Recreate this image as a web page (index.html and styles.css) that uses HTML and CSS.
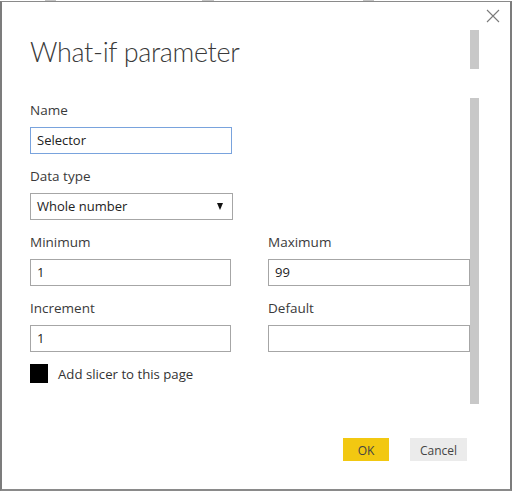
FILE: index.html
```html
<!DOCTYPE html>
<html>
<head>
<meta charset="utf-8">
<link rel="stylesheet" href="styles.css">
</head>
<body>
<div class="tabs"><span class="tab t1"></span><span class="tab t2"></span><span class="tab t3"></span></div>
<div class="dialog">
  <button class="close" aria-label="Close">
    <svg width="14" height="14" viewBox="0 0 14 14"><path d="M1 1 L13 13 M13 1 L1 13" stroke="#7a7a7a" stroke-width="1.1" fill="none"/></svg>
  </button>
  <div class="content">
    <h1 class="title">What-if parameter</h1>
    <div class="form">
      <div class="field">
        <label class="label">Name</label>
        <div class="input focus">Selector</div>
      </div>
      <div class="field">
        <label class="label">Data type</label>
        <div class="input select"><span>Whole number</span><span class="arrow"></span></div>
      </div>
      <div class="grid">
        <div class="field">
          <label class="label">Minimum</label>
          <div class="input">1</div>
        </div>
        <div class="field">
          <label class="label">Maximum</label>
          <div class="input">99</div>
        </div>
        <div class="field">
          <label class="label">Increment</label>
          <div class="input">1</div>
        </div>
        <div class="field">
          <label class="label">Default</label>
          <div class="input"></div>
        </div>
      </div>
      <div class="check-row">
        <span class="checkbox"></span>
        <span class="check-label">Add slicer to this page</span>
      </div>
    </div>
    <div class="footer">
      <button class="btn ok">OK</button>
      <button class="btn cancel">Cancel</button>
    </div>
  </div>
  <div class="scroll">
    <div class="thumb small"></div>
    <div class="thumb big"></div>
  </div>
</div>
</body>
</html>
```
FILE: styles.css
```css
html, body {
  margin: 0;
  padding: 0;
  background: #ffffff;
}
body {
  font-family: "Open Sans", "Liberation Sans", sans-serif;
  color: #333333;
  width: 512px;
  height: 492px;
  overflow: hidden;
}
.tabs {
  height: 1px;
  display: flex;
}
.tab {
  height: 1px;
  background: #c4c4c4;
  display: block;
}
.t1 { margin-left: 45px; width: 11px; }
.t2 { margin-left: 146px; width: 12px; }
.t3 { margin-left: 149px; width: 11px; }
.dialog {
  position: relative;
  box-sizing: border-box;
  width: 512px;
  height: 490px;
  border-top: 1px solid #8a8a8a;
  border-left: 2px solid #7c7c7c;
  border-right: 2px solid #7c7c7c;
  border-bottom: 2px solid #8a8a8a;
  display: flex;
  padding-left: 28px;
  background: #fff;
}
.close {
  position: absolute;
  top: 7px;
  right: 10px;
  width: 14px;
  height: 14px;
  padding: 0;
  border: 0;
  background: transparent;
  display: flex;
}
.content {
  width: 440px;
  display: flex;
  flex-direction: column;
  padding-top: 30px;
  padding-bottom: 28px;
}
.title {
  margin: 0;
  font-family: "Lato", "Open Sans", sans-serif;
  font-weight: 300;
  font-size: 27px;
  line-height: 40px;
  color: #3a3a3a;
  letter-spacing: -0.35px;
}
.form {
  margin-top: 29px;
  display: flex;
  flex-direction: column;
  gap: 13px;
}
.grid {
  display: grid;
  grid-template-columns: 201px 202px;
  column-gap: 37px;
  row-gap: 13px;
}
.field {
  display: flex;
  flex-direction: column;
  gap: 8px;
  width: 202px;
}
.grid .field { width: auto; }
.label {
  font-size: 13.5px;
  line-height: 18px;
  color: #3a3a3a;
}
.input {
  box-sizing: border-box;
  height: 27px;
  border: 1px solid #a6a6a6;
  padding: 0 6px;
  font-size: 13px;
  line-height: 25px;
  color: #222;
  background: #fff;
}
.input.focus {
  border-color: #79a3dd;
  width: 202px;
}
.select {
  display: flex;
  justify-content: space-between;
  align-items: center;
  width: 203px;
  padding-right: 9px;
}
.arrow {
  width: 0;
  height: 0;
  border-left: 3.5px solid transparent;
  border-right: 3.5px solid transparent;
  border-top: 7px solid #111;
}
.check-row {
  margin-top: -1px;
  display: flex;
  align-items: center;
  gap: 10px;
}
.checkbox {
  width: 18px;
  height: 19px;
  background: #000;
  display: block;
}
.check-label {
  font-size: 13.2px;
  color: #333;
}
.footer {
  margin-top: auto;
  display: flex;
  justify-content: flex-end;
  gap: 21px;
  padding-right: 3px;
}
.btn {
  height: 23px;
  border: 0;
  padding: 0;
  font-family: "Open Sans", "Liberation Sans", sans-serif;
  font-size: 12px;
  color: #444;
  line-height: 25px;
  box-sizing: border-box;
}
.ok {
  width: 46px;
  background: #f2c811;
}
.cancel {
  width: 57px;
  background: #ebebeb;
}
.scroll {
  width: 9px;
  display: flex;
  flex-direction: column;
  padding-top: 28px;
}
.thumb {
  background: #c8c8c8;
  width: 9px;
}
.thumb.small { height: 39px; }
.thumb.big { margin-top: 29px; height: 306px; }
```
